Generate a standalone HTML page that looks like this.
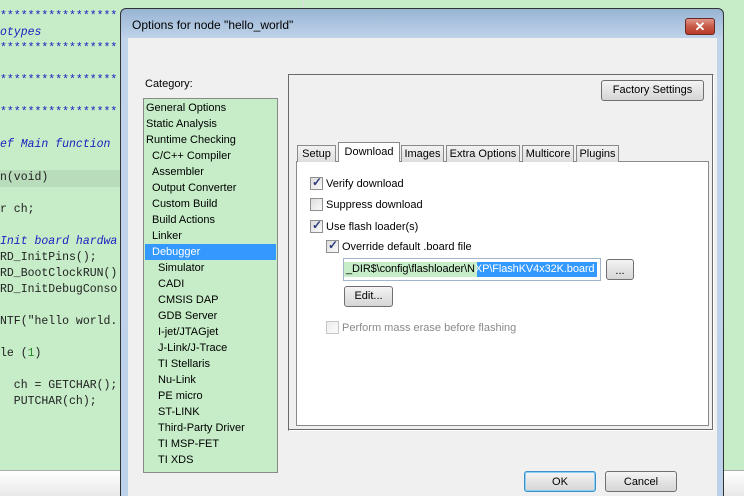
<!DOCTYPE html>
<html><head><style>
*{margin:0;padding:0;box-sizing:border-box}
html,body{width:744px;height:496px;overflow:hidden}
body{background:#c6ecc8;font-family:"Liberation Sans",sans-serif;font-size:11px;position:relative}
.a{position:absolute}
.code{font-family:"Liberation Mono",monospace;font-size:11.5px;color:#222;white-space:pre;line-height:16px}
.cm{color:#2020c0;font-style:italic}
.btn{position:absolute;border:1px solid #707070;border-radius:3px;background:linear-gradient(#f4f4f4,#e4e4e4 50%,#d6d6d6);text-align:center;color:#000;font-size:11px}
.cb{position:absolute;width:13px;height:13px;border:1px solid #8e8f8f;background:linear-gradient(135deg,#dcdcdc,#fafafa)}
.cb.k::after{content:"✓";position:absolute;left:1px;top:-3px;font-size:12px;color:#2a3a7a;font-weight:bold}
.lbl{position:absolute;font-size:11px;color:#000}
.tab{position:absolute;top:145px;height:17px;border:1px solid #8a8a8a;border-bottom:none;background:linear-gradient(#f2f2f2,#dedede);font-size:11px;text-align:center;line-height:16px}
.it{position:absolute;left:146px;font-size:11px;height:16px;line-height:16px}
</style></head><body>
<div class="a code" style="left:0;top:9px;width:120px;overflow:hidden;color:#2020c0">*****************
<span class="cm">otypes</span>
*****************

*****************

*****************

<span class="cm">ef Main function</span>
</div>
<div class="a" style="left:0;top:170px;width:120px;height:17px;background:#b9dcbb"></div>
<div class="a code" style="left:0;top:170px;width:120px;overflow:hidden">n(void)

r ch;

<span class="cm">Init board hardwa</span>
RD_InitPins();
RD_BootClockRUN()
RD_InitDebugConso

NTF("hello world.

le (<span style="color:#2a8a2a">1</span>)

  ch = GETCHAR();
  PUTCHAR(ch);</div>
<div class="a" style="left:0;top:470px;width:120px;height:26px;background:linear-gradient(#fff,#e8e8e8);border-top:1px solid #aaa"></div>
<div class="a" style="left:303px;top:0;width:1px;height:8px;background:#ddd"></div>

<!-- dialog -->
<div class="a" style="left:120px;top:8px;width:604px;height:490px;border:1px solid #333;border-radius:6px 6px 0 0;background:linear-gradient(#98b4d4,#c0d4ea 30px,#bcd2ea)"></div>
<div class="a" style="left:132px;top:18px;font-size:12px;color:#000">Options for node "hello_world"</div>
<div class="a" style="left:685px;top:18px;width:30px;height:17px;border:1px solid #6a2a22;border-radius:3px;background:linear-gradient(#e0968a,#c75a48 50%,#b83a28);color:#fff;font-weight:bold;text-align:center;font-size:13px;line-height:15px">✕</div>
<div class="a" style="left:128px;top:38px;width:589px;height:460px;background:#f0f0f0"></div>

<div class="lbl" style="left:145px;top:78px">Category:</div>
<div class="a" style="left:143px;top:98px;width:135px;height:375px;border:1px solid #8a8a8a;background:#c6ecc8"></div>
<div class="a" style="left:145px;top:244px;width:131px;height:16px;background:#3399ff"></div>
<div class="it" style="top:100px">General Options</div>
<div class="it" style="top:116px">Static Analysis</div>
<div class="it" style="top:132px">Runtime Checking</div>
<div class="it" style="top:148px;left:152px">C/C++ Compiler</div>
<div class="it" style="top:164px;left:152px">Assembler</div>
<div class="it" style="top:180px;left:152px">Output Converter</div>
<div class="it" style="top:196px;left:152px">Custom Build</div>
<div class="it" style="top:212px;left:152px">Build Actions</div>
<div class="it" style="top:228px;left:152px">Linker</div>
<div class="it" style="top:244px;left:152px;color:#fff">Debugger</div>
<div class="it" style="top:260px;left:158px">Simulator</div>
<div class="it" style="top:276px;left:158px">CADI</div>
<div class="it" style="top:292px;left:158px">CMSIS DAP</div>
<div class="it" style="top:308px;left:158px">GDB Server</div>
<div class="it" style="top:324px;left:158px">I-jet/JTAGjet</div>
<div class="it" style="top:340px;left:158px">J-Link/J-Trace</div>
<div class="it" style="top:356px;left:158px">TI Stellaris</div>
<div class="it" style="top:372px;left:158px">Nu-Link</div>
<div class="it" style="top:388px;left:158px">PE micro</div>
<div class="it" style="top:404px;left:158px">ST-LINK</div>
<div class="it" style="top:420px;left:158px">Third-Party Driver</div>
<div class="it" style="top:436px;left:158px">TI MSP-FET</div>
<div class="it" style="top:452px;left:158px">TI XDS</div>

<div class="a" style="left:288px;top:74px;width:426px;height:357px;border:1px solid #6a6a6a;border-right-color:#fff;border-bottom-color:#fff;box-shadow:inset -1px -1px 0 #6a6a6a"></div>
<div class="btn" style="left:601px;top:80px;width:103px;height:21px;line-height:19px">Factory Settings</div>

<div class="a" style="left:296px;top:161px;width:413px;height:265px;border:1px solid #8a8a8a;background:#fff"></div>
<div class="tab" style="left:297px;width:39px">Setup</div>
<div class="tab" style="left:338px;top:142px;width:62px;height:20px;background:#fff;line-height:19px">Download</div>
<div class="tab" style="left:401px;width:43px">Images</div>
<div class="tab" style="left:446px;width:74px">Extra Options</div>
<div class="tab" style="left:522px;width:52px">Multicore</div>
<div class="tab" style="left:576px;width:43px">Plugins</div>

<div class="cb k" style="left:310px;top:177px"></div><div class="lbl" style="left:326px;top:178px">Verify download</div>
<div class="cb" style="left:310px;top:198px"></div><div class="lbl" style="left:326px;top:199px">Suppress download</div>
<div class="cb k" style="left:310px;top:220px"></div><div class="lbl" style="left:326px;top:221px">Use flash loader(s)</div>
<div class="cb k" style="left:326px;top:240px"></div><div class="lbl" style="left:342px;top:241px">Override default .board file</div>
<div class="a" style="left:343px;top:258px;width:258px;height:23px;border:1px solid #a0b4cc;background:#fff"></div>
<div class="a" style="left:344px;top:262px;width:133px;height:15px;background:#c6ecc8"></div>
<div class="a" style="left:477px;top:262px;width:120px;height:15px;background:#3399ff"></div>
<div class="a" style="left:346px;top:262px;font-size:11px;line-height:15px;white-space:nowrap;letter-spacing:-0.1px">_DIR$\config\flashloader\N<span style="color:#fff">XP\FlashKV4x32K.board</span></div>
<div class="btn" style="left:606px;top:259px;width:28px;height:21px;line-height:22px">...</div>
<div class="btn" style="left:344px;top:286px;width:49px;height:21px;line-height:19px">Edit...</div>
<div class="cb" style="left:326px;top:321px;opacity:.5"></div><div class="lbl" style="left:342px;top:322px;color:#8a8a8a">Perform mass erase before flashing</div>

<div class="btn" style="left:524px;top:471px;width:72px;height:21px;line-height:20px;border-color:#3c8fc8;box-shadow:inset 0 0 0 1px #8ad0f4">OK</div>
<div class="btn" style="left:605px;top:471px;width:72px;height:21px;line-height:20px">Cancel</div>
<div class="a" style="left:724px;top:70px;width:20px;height:400px;background:#c6ecc8"></div>
<div class="a" style="left:724px;top:470px;width:20px;height:26px;background:linear-gradient(#fff,#e8e8e8);border-top:1px solid #aaa"></div>
</body></html>
